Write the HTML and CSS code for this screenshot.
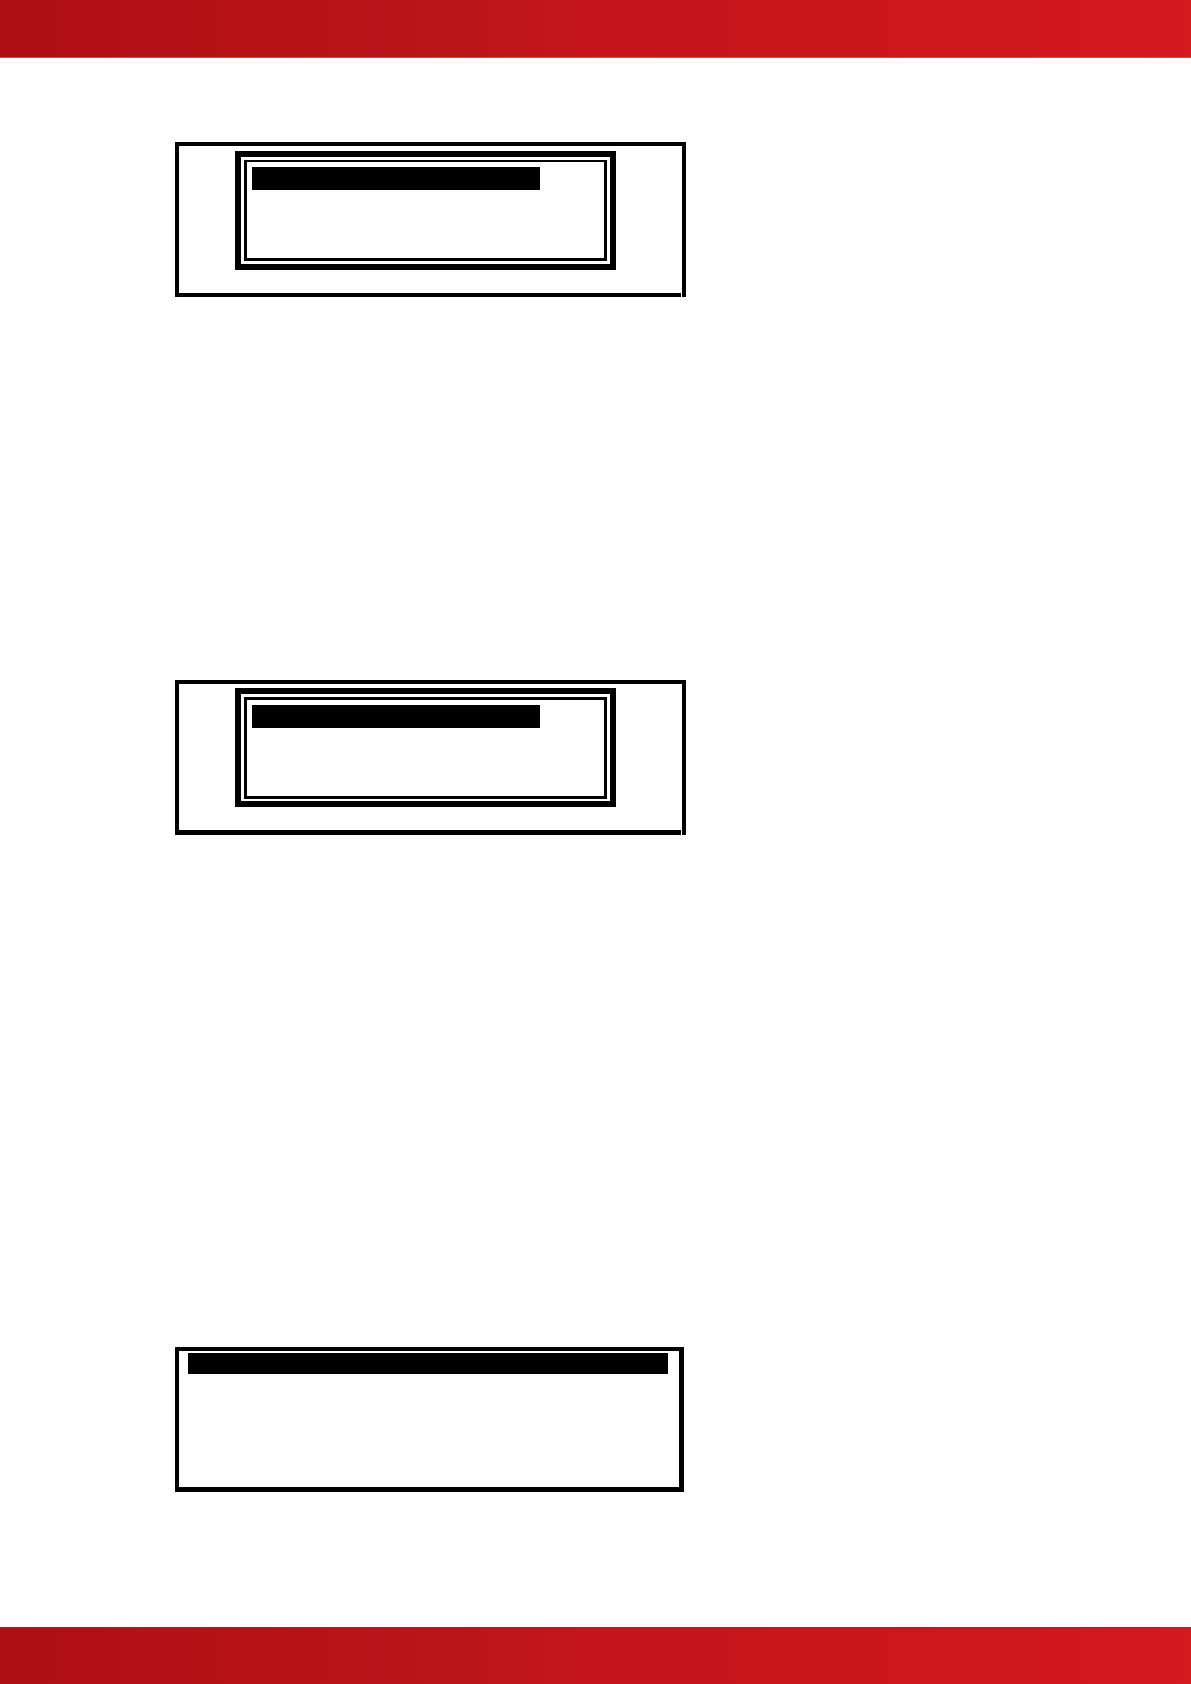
FILE: index.html
```html
<!DOCTYPE html>
<html lang="en">
<head>
    <meta charset="UTF-8">
    <meta name="viewport" content="width=device-width, initial-scale=1.0">
    <title>Panel Displays</title>
    <link rel="stylesheet" href="styles.css">
</head>
<body>
    <header class="band band-top"></header>

    <main class="content">
        <section class="screen screen-menu">
            <div class="menu">
                <div class="menu-inner">
                    <div class="highlight"></div>
                </div>
            </div>
        </section>

        <section class="screen screen-menu screen-second">
            <div class="menu">
                <div class="menu-inner">
                    <div class="highlight"></div>
                </div>
            </div>
        </section>

        <section class="screen screen-list">
            <div class="highlight"></div>
        </section>
    </main>

    <footer class="band band-bottom"></footer>
</body>
</html>
```

FILE: styles.css
```css
* {
    box-sizing: border-box;
}

body {
    margin: 0;
    min-height: 100vh;
    display: flex;
    flex-direction: column;
    font-family: "Liberation Sans", Arial, sans-serif;
    background: #fff;
    color: #000;
}

.band {
    height: 57px;
    flex-shrink: 0;
    background: linear-gradient(to right, #ad0f13, #b51216 18%, #bb151a 40%, #c5161b 50%, #c9161b 70%, #cd171c 80%, #d4191f);
}

.band-top {
    height: 58px;
    border-bottom: 1px solid #dc4a4e;
}

.band-bottom {
    border-top: 1px solid #962428;
}

.content {
    flex: 1;
    padding: 84px 20px 135px 175px;
}

.screen {
    width: 100%;
    border: 4px solid #000;
}

.screen-menu {
    position: relative;
    max-width: 511px;
    min-height: 155px;
    padding: 5px 66px 0 56px;
}

/* thin break where the bottom line meets the right side */
.screen-menu::after {
    content: "";
    position: absolute;
    right: 0;
    bottom: -5px;
    width: 1px;
    height: 5px;
    background: #fff;
}

.screen-second {
    margin-top: 383px;
    padding-top: 4px;
    border-bottom-width: 5px;
}

.menu {
    border: 6px solid #000;
    padding: 3px;
}

.menu-inner {
    min-height: 101px;
    padding: 5px;
    border: 3px solid #000;
    border-top-width: 2px;
}

.screen-second .menu {
    padding-bottom: 2px;
}

.screen-second .menu-inner {
    min-height: 102px;
    border-top-width: 3px;
}

.highlight {
    max-width: 288px;
    height: 23px;
    background: #000;
}

.screen-list {
    max-width: 509px;
    min-height: 145px;
    margin-top: 512px;
    padding: 2px 11px 2px 9px;
    border-right-width: 5px;
    border-bottom-width: 5px;
}

.screen-list .highlight {
    max-width: none;
    height: 21px;
}

@media (max-width: 700px) {
    .content {
        padding-left: 20px;
    }

    .screen-menu {
        padding-left: 20px;
        padding-right: 20px;
    }
}
```
